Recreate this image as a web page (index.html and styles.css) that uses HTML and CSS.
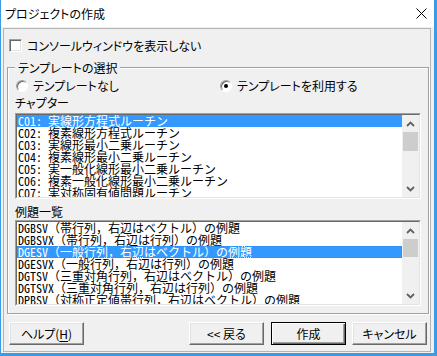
FILE: index.html
```html
<!DOCTYPE html>
<html lang="ja">
<head>
<meta charset="utf-8">
<title>プロジェクトの作成</title>
<link rel="stylesheet" href="styles.css">
</head>
<body>
<div class="window">
  <div class="titlebar">
    <span class="title">プロジェクトの作成</span>
    <svg class="close" width="11" height="11" viewBox="0 0 11 11"><path d="M0.5 0.5L10.5 10.5M10.5 0.5L0.5 10.5" stroke="#000" stroke-width="1"/></svg>
  </div>
  <div class="client">
    <div class="frame">
      <label class="check"><span class="checkbox"></span>コンソールウィンドウを表示しない</label>

      <fieldset class="group">
        <legend>テンプレートの選択</legend>
        <div class="radios">
          <label class="radio first"><span class="dot"></span>テンプレートなし</label>
          <label class="radio"><span class="dot on"></span>テンプレートを利用する</label>
        </div>

        <div class="caption">チャプター</div>
        <div class="listbox">
          <div class="well">
            <ul class="items">
              <li class="sel">C01: 実線形方程式ルーチン</li>
              <li>C02: 複素線形方程式ルーチン</li>
              <li>C03: 実線形最小二乗ルーチン</li>
              <li>C04: 複素線形最小二乗ルーチン</li>
              <li>C05: 実一般化線形最小二乗ルーチン</li>
              <li>C06: 複素一般化線形最小二乗ルーチン</li>
              <li>C07: 実対称固有値問題ルーチン</li>
            </ul>
            <div class="scrollbar">
              <div class="arrow"><svg width="9" height="6" viewBox="0 0 9 6"><path d="M1 5L4.5 1.5L8 5" fill="none" stroke="#606060" stroke-width="1.8"/></svg></div>
              <div class="track"><div class="thumb"></div></div>
              <div class="arrow"><svg width="9" height="6" viewBox="0 0 9 6"><path d="M1 1L4.5 4.5L8 1" fill="none" stroke="#606060" stroke-width="1.8"/></svg></div>
            </div>
          </div>
        </div>

        <div class="caption second">例題一覧</div>
        <div class="listbox lower">
          <div class="well">
            <ul class="items">
              <li>DGBSV（帯行列，右辺はベクトル）の例題</li>
              <li>DGBSVX（帯行列，右辺は行列）の例題</li>
              <li class="sel focus">DGESV（一般行列，右辺はベクトル）の例題</li>
              <li>DGESVX（一般行列，右辺は行列）の例題</li>
              <li>DGTSV（三重対角行列，右辺はベクトル）の例題</li>
              <li>DGTSVX（三重対角行列，右辺は行列）の例題</li>
              <li>DPBSV（対称正定値帯行列，右辺はベクトル）の例題</li>
            </ul>
            <div class="scrollbar">
              <div class="arrow"><svg width="9" height="6" viewBox="0 0 9 6"><path d="M1 5L4.5 1.5L8 5" fill="none" stroke="#606060" stroke-width="1.8"/></svg></div>
              <div class="track"><div class="thumb short"></div></div>
              <div class="arrow"><svg width="9" height="6" viewBox="0 0 9 6"><path d="M1 1L4.5 4.5L8 1" fill="none" stroke="#606060" stroke-width="1.8"/></svg></div>
            </div>
          </div>
        </div>
      </fieldset>

      <div class="buttons">
        <button class="btn">ヘルプ(<u>H</u>)</button>
        <button class="btn back">&lt;&lt; 戻る</button>
        <button class="btn default">作成</button>
        <button class="btn">キャンセル</button>
      </div>
    </div>
  </div>
</div>
</body>
</html>
```

FILE: styles.css
```css
body{
    margin: 0;
    background: #fff;
    font-family: "Noto Sans CJK JP", sans-serif;
    font-size: 12px;
    color: #000;
    font-feature-settings: "palt";
}
.window{
    box-sizing: border-box;
    width: 437px;
    height: 356px;
    border-left: 1px solid #3c9be2;
    border-right: 3px solid #3c9be2;
    border-bottom: 3px solid #3c9be2;
    background: #f0f0f0;
    display: flex;
    flex-direction: column;
}
.titlebar{
    height: 27px;
    background: #fff;
    display: flex;
    align-items: center;
    padding: 0 7px 0 4px;
}
.title{
    flex: 1;
    line-height: 14px;
}
.close{
    margin-top: -1px;
}
.client{
    flex: 1;
    display: flex;
    padding: 1px 3px 1px 2px;
}
.frame{
    flex: 1;
    border: 1px solid #b4b4b4;
    display: flex;
    flex-direction: column;
}

/* checkbox */
.check{
    display: flex;
    align-items: center;
    height: 13px;
    line-height: 13px;
    margin: 10px 0 0 5px;
}
.checkbox{
    box-sizing: border-box;
    width: 13px;
    height: 13px;
    margin-right: 5px;
    background: #fff;
    border: 1px solid;
    border-color: #a0a0a0 #fff #fff #a0a0a0;
    box-shadow: inset 1px 1px #696969, inset -1px -1px #e3e3e3;
}

/* group box */
.group{
    margin: 8px 1px 0 3px;
    padding: 0 7px 7px 7px;
    border: 1px solid #a0a0a0;
    box-shadow: inset 1px 1px #fff, 1px 1px #fff;
    min-inline-size: 0;
}
.group legend{
    padding: 0 3px;
    line-height: 15px;
    height: 15px;
    background: #f0f0f0;
}
.radios{
    display: flex;
    align-items: center;
    height: 14px;
    margin-top: 4px;
}
.radio{
    display: flex;
    align-items: center;
    line-height: 14px;
}
.radio.first{
    width: 204px;
}
.dot{
    box-sizing: border-box;
    width: 12px;
    height: 12px;
    margin: 0 5px 0 1px;
    border-radius: 50%;
    background: #fff;
    border: 1px solid;
    border-color: #a0a0a0 #fff #fff #a0a0a0;
    box-shadow: inset 1px 1px #696969;
    display: flex;
    align-items: center;
    justify-content: center;
}
.dot.on::after{
    content: "";
    width: 4px;
    height: 4px;
    border-radius: 50%;
    background: #000;
}
.caption{
    line-height: 14px;
    height: 14px;
    margin-top: 3px;
}
.caption.second{
    margin-top: 6px;
}

/* list boxes */
.listbox{
    height: 86px;
    margin-top: 3px;
    box-sizing: border-box;
    border: 1px solid;
    border-color: #a0a0a0 #fff #fff #a0a0a0;
    display: flex;
}
.listbox.lower{
    margin-top: 1px;
}
.well{
    flex: 1;
    display: flex;
    border: 1px solid;
    border-color: #696969 #e3e3e3 #e3e3e3 #696969;
    background: #fff;
    overflow: hidden;
}
.items{
    flex: 1;
    margin: 0;
    padding: 0;
    list-style: none;
    overflow: hidden;
    font-family: "Noto Sans Mono CJK JP", "Noto Sans CJK JP", monospace;
    font-feature-settings: normal;
    font-size: 12px;
}
.items li{
    height: 12px;
    line-height: 12px;
    padding-left: 1px;
    white-space: nowrap;
}
.items li.sel{
    background: #3399ff;
    color: #fff;
}
.items li.focus{
    outline: 1px dotted #cc6600;
    outline-offset: -1px;
}
.scrollbar{
    width: 17px;
    display: flex;
    flex-direction: column;
    background: #f0f0f0;
}
.arrow{
    height: 17px;
    display: flex;
    align-items: center;
    justify-content: center;
}
.track{
    flex: 1;
}
.thumb{
    height: 19px;
    margin: 0 1px;
    background: #cdcdcd;
}
.thumb.short{
    height: 18px;
}

/* buttons */
.buttons{
    display: flex;
    margin: 8px 0 0 5px;
}
.btn{
    box-sizing: border-box;
    width: 75px;
    height: 23px;
    padding: 0;
    font: inherit;
    color: #000;
    background: #f0f0f0;
    border: 1px solid;
    border-color: #fff #696969 #696969 #fff;
    box-shadow: inset -1px -1px #a0a0a0, inset 1px 1px #e3e3e3;
}
.btn u{
    text-decoration-thickness: 1px;
    text-underline-offset: 2px;
}
.btn.back{
    margin-left: auto;
}
.btn.default{
    margin-left: 7px;
    border: 1px solid #000;
    box-shadow: inset 1px 1px #fff, inset -1px -1px #696969, inset -2px -2px #a0a0a0;
}
.btn.default + .btn{
    margin-left: 6px;
    margin-right: 3px;
}
```
